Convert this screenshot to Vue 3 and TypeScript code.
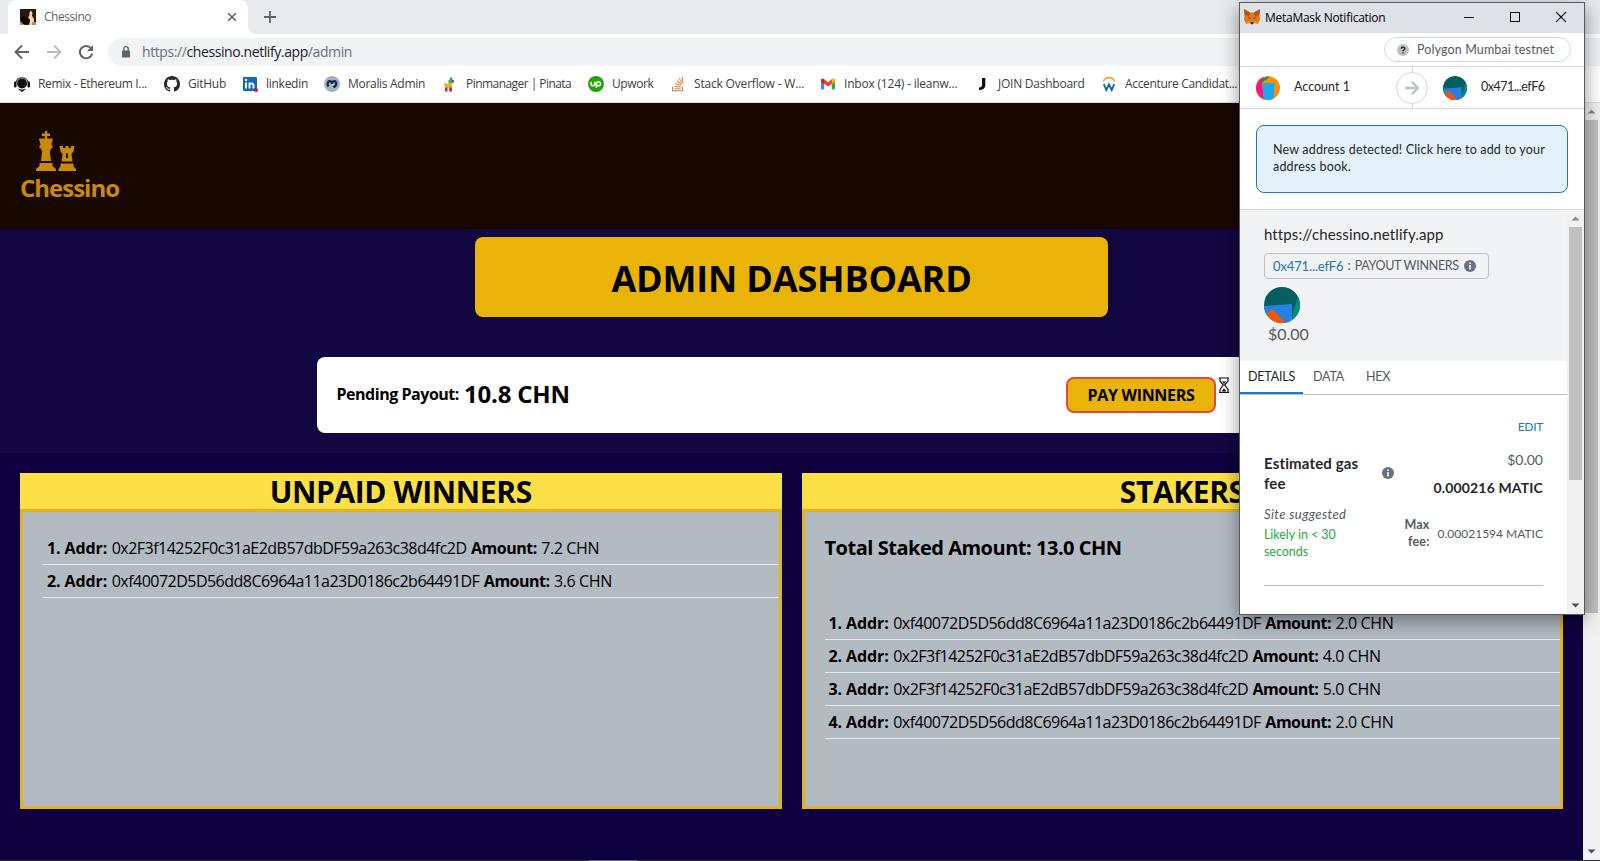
<script setup lang="ts">
interface Bookmark { id: string; label: string; width: number; tracking: number }
interface Entry { addr: string; amount: string }

const bookmarks: Bookmark[] = [
  { id: 'remix', label: 'Remix - Ethereum I...', width: 126, tracking: -0.33 },
  { id: 'github', label: 'GitHub', width: 54, tracking: -0.27 },
  { id: 'linkedin', label: 'linkedin', width: 58, tracking: -0.27 },
  { id: 'moralis', label: 'Moralis Admin', width: 94, tracking: -0.3 },
  { id: 'pinata', label: 'Pinmanager | Pinata', width: 122, tracking: -0.55 },
  { id: 'upwork', label: 'Upwork', width: 58, tracking: -0.4 },
  { id: 'stack', label: 'Stack Overflow - W...', width: 126, tracking: -0.18 },
  { id: 'gmail', label: 'Inbox (124) - ileanw...', width: 130, tracking: -0.2 },
  { id: 'join', label: 'JOIN Dashboard', width: 103, tracking: -0.24 },
  { id: 'accenture', label: 'Accenture Candidat...', width: 114, tracking: -0.34 },
]

const A = '0x2F3f14252F0c31aE2dB57dbDF59a263c38d4fc2D'
const B = '0xf40072D5D56dd8C6964a11a23D0186c2b64491DF'
const winners: Entry[] = [
  { addr: A, amount: '7.2 CHN' },
  { addr: B, amount: '3.6 CHN' },
]
const stakers: Entry[] = [
  { addr: B, amount: '2.0 CHN' },
  { addr: A, amount: '4.0 CHN' },
  { addr: A, amount: '5.0 CHN' },
  { addr: B, amount: '2.0 CHN' },
]
</script>

<template>
  <div class="screen">
    <div class="tabstrip">
      <div class="tab">
        <svg class="ic16" viewBox="0 0 16 16"><rect width="16" height="16" fill="#2a1712" /><path d="M9 16 10 11 8 9 9.500 6 9.500 3.500 11 1.500 12.500 4 12 7 14 10V16Z" fill="#efd9a8" /><path d="M1 9 4 7 8 9 10 11 9 15H3Z" fill="#080606" /><path d="M0 12 2 14 5 16H0ZM12 13H16V16H12Z" fill="#b98c5a" /></svg>
        <span class="t tabtitle">Chessino</span>
        <svg class="close" viewBox="0 0 16 16"><path d="M4.200 4.200 11.800 11.800M11.800 4.200 4.200 11.800" stroke="#5f6368" stroke-width="1.600" /></svg>
      </div>
      <svg class="flare" viewBox="0 0 8 8"><path d="M0 0A8 8 0 0 0 8 8H0Z" fill="#fff" /></svg>
      <svg class="plus" viewBox="0 0 16 16"><path d="M8 2V14M2 8H14" stroke="#5f6368" stroke-width="1.800" /></svg>
    </div>
    <div class="toolbar">
      <svg class="nav" viewBox="0 0 16 16"><path d="M15 8H2M8 1.500 1.500 8 8 14.500" fill="none" stroke="#5f6368" stroke-width="1.900" /></svg>
      <svg class="nav" viewBox="0 0 16 16"><path d="M1 8H14M8 1.500 14.500 8 8 14.500" fill="none" stroke="#babcbe" stroke-width="1.900" /></svg>
      <svg class="nav" viewBox="0 0 16 16"><path d="M13 4.200A6.200 6.200 0 1 0 14.200 9.500" fill="none" stroke="#5f6368" stroke-width="2" /><path d="M15 1V7H9Z" fill="#5f6368" /></svg>
      <div class="omnibox">
        <svg class="lock" viewBox="0 0 10 14"><rect x="1" y="5.500" width="8" height="7" rx="1" fill="#5f6368" /><path d="M2.800 6V3.800A2.200 2.200 0 0 1 7.200 3.800V6" fill="none" stroke="#5f6368" stroke-width="1.400" /></svg>
        <span class="t url"><i>https://</i>chessino.netlify.app<i>/admin</i></span>
      </div>
    </div>
    <div class="bookmarks">
      <div v-for="b in bookmarks" :key="b.id" class="bookmark">
        <svg class="ic16" viewBox="0 0 16 16">
          <g v-if="b.id === 'remix'"><circle cx="8" cy="7.500" r="5" fill="#111" /><path d="M1.800 7A6.300 6.300 0 0 1 14.200 7" fill="none" stroke="#444" stroke-width="1.200" /><rect x="0" y="5.500" width="2.500" height="6" rx="1.200" fill="#111" /><rect x="13.500" y="5.500" width="2.500" height="6" rx="1.200" fill="#111" /><path d="M3.500 12.500 8 16 12.500 12.500 8 13.800Z" fill="#111" /></g>
          <path v-else-if="b.id === 'github'" fill="#24292f" d="M8 0C3.580 0 0 3.580 0 8c0 3.540 2.290 6.530 5.470 7.590.4.070.55-.17.55-.38 0-.19-.01-.82-.01-1.490-2.010.37-2.530-.49-2.690-.94-.09-.23-.48-.94-.82-1.130-.28-.15-.68-.52-.01-.53.63-.01 1.080.58 1.230.82.72 1.210 1.870.87 2.330.66.070-.52.28-.87.51-1.070-1.780-.2-3.640-.89-3.640-3.950 0-.87.31-1.590.82-2.150-.08-.2-.36-1.020.08-2.120 0 0 .67-.21 2.200.82.64-.18 1.320-.27 2-.27s1.360.09 2 .27c1.530-1.040 2.200-.82 2.200-.82.44 1.100.16 1.920.08 2.120.51.56.82 1.270.82 2.150 0 3.070-1.870 3.750-3.650 3.950.29.25.54.73.54 1.480 0 1.070-.01 1.930-.01 2.200 0 .21.15.46.55.38A8.010 8.010 0 0 0 16 8c0-4.420-3.580-8-8-8z" />
          <g v-else-if="b.id === 'linkedin'"><rect x="1" y="1" width="14" height="14" rx="1" fill="#1467b8" /><path d="M4 6.500V12.500M7.500 12.500V6.500M7.500 9.500C7.500 7 11.500 6.500 11.500 9.500V12.500" fill="none" stroke="#fff" stroke-width="1.900" /><circle cx="4" cy="4" r="1.200" fill="#fff" /><circle cx="14" cy="14" r="2" fill="#d0142c" /></g>
          <g v-else-if="b.id === 'moralis'"><circle cx="8" cy="8" r="8" fill="#a3b2c2" /><path d="M4.500 10.500C2.500 8 4 4.800 6 5.200 7.200 5.400 8 6.500 8 8 8 6.500 8.800 5.400 10 5.200 12.500 5 13 9 10.500 10.800L9.500 9.500" fill="none" stroke="#10264f" stroke-width="2.200" /><circle cx="8.800" cy="8.800" r="1" fill="#e3e58a" /></g>
          <g v-else-if="b.id === 'pinata'" transform="translate(1 0)"><path d="M7.500 1 9.500 2 9 4.500 6.500 4Z" fill="#17a5a5" /><path d="M5.500 4H9V7H5.500Z" fill="#3fae5a" /><path d="M9 3.500 11 4.500V6.500H9Z" fill="#4358a5" /><path d="M8.500 5.500H10V7H8.500Z" fill="#d9305c" /><path d="M1 7 4 8V10H2Z" fill="#67b52b" /><path d="M2 9 5.500 7H9V12H2Z" fill="#f3b616" /><path d="M2 11.500H4.500V15.500H2ZM6.200 11.500H9V15.500H6.200Z" fill="#c31b8c" /></g>
          <g v-else-if="b.id === 'upwork'"><circle cx="8" cy="8" r="8" fill="#1fa50a" /><path d="M3 5.800V7.800A1.900 1.900 0 0 0 6.800 7.800V5.800M6.800 5.800C7.300 7.700 8.200 9.800 10.600 9.800A2.050 2.050 0 1 0 8.900 6.500L8.200 12" fill="none" stroke="#fff" stroke-width="1.500" /></g>
          <g v-else-if="b.id === 'stack'" fill="none"><path d="M2.600 10.500V14.800H12.600V10.500" stroke="#8b8b8b" stroke-width="1.100" /><path d="M4.500 12.700H10.700M4.600 10.300 10.700 11.100M5.200 7.600 11 9.500M6.800 4.700 11.800 8.200M9 2.200 12.500 7M12 .8 13.200 6.300" stroke="#e88037" stroke-width="1.100" /></g>
          <g v-else-if="b.id === 'gmail'"><path d="M1 4.500 4.200 7V13.500H2A1 1 0 0 1 1 12.500Z" fill="#4285f4" /><path d="M15 4.500 11.800 7V13.500H14A1 1 0 0 0 15 12.500Z" fill="#34a853" /><path d="M1 4.500C1 2.500 3 2.300 4.200 3.300L8 6.200 11.800 3.300C13 2.300 15 2.500 15 4.500V5.500L8 10.500 1 5.500Z" fill="#ea4335" /><path d="M15 4.500V5.800L11.800 8V3.300C13 2.300 15 2.500 15 4.500Z" fill="#fbbc04" /><path d="M1 4.500V5.800L4.200 8V3.300C3 2.300 1 2.500 1 4.500Z" fill="#c5221f" /></g>
          <path v-else-if="b.id === 'join'" d="M8 2H11.300V9C11.300 12.500 9 14 5 14V11.500C7.300 11.300 8 10.700 8 9Z" fill="#0d0f22" />
          <g v-else fill="none"><path d="M2.500 5.200A6 6 0 0 1 13.500 5.200" stroke="#f2a32c" stroke-width="1.600" /><path d="M2.800 8 5.300 14 8 8.500 10.700 14 13.200 8" stroke="#1266b1" stroke-width="1.900" /></g>
        </svg>
        <span class="label" :style="{ width: b.width + 'px', letterSpacing: b.tracking + 'px' }">{{ b.label }}</span>
      </div>
    </div>

    <div class="viewport">
      <main class="page">
        <header class="site-header">
          <div class="brand">
            <svg class="pieces" viewBox="0 0 42 42" fill="#c98a0a"><path d="M9.800 1H12.200V3.500H15V6H12.200V8.500H18L16.500 14.500 17.500 16V18L15.800 18.500V20L14.800 21 16 31H6L7.200 21 6.200 20V18.500L4.500 18V16L5.500 14.500 4 8.500H9.800V6H7V3.500H9.800ZM4.500 33H17.500V36L21 39V41H1V39L4.500 36Z" /><path d="M24.500 16H28V18H30.500V16H33.500V18H36V16H39.500L38.500 21.500 36.500 24 37.500 31.500H26.500L27.500 24 25.500 21.500ZM31 23.500V28H33V23.500ZM25.500 33.500H38.500V36.500L41 39V41H23.500V39L25.500 36.500Z" fill-rule="evenodd" /></svg>
            <span class="t brand-name">Chessino</span>
          </div>
        </header>
        <section class="hero">
          <h1 class="banner">ADMIN DASHBOARD</h1>
          <div class="payout">
            <span class="t payout-label">Pending Payout:</span>
            <span class="t payout-value">10.8 CHN</span>
            <button class="pay">PAY WINNERS</button>
          </div>
        </section>
        <section class="panels">
          <article class="panel">
            <h2>UNPAID WINNERS</h2>
            <div class="panel-body">
              <ul>
                <li v-for="(w, i) in winners" :key="i"><b class="num">{{ i + 1 }}. Addr:</b><span class="addr">{{ w.addr }}</span><b class="amt">Amount:</b><span class="val">{{ w.amount }}</span></li>
              </ul>
            </div>
          </article>
          <article class="panel">
            <h2>STAKERS</h2>
            <div class="panel-body">
              <p class="total">Total Staked Amount: 13.0 CHN</p>
              <ul>
                <li v-for="(w, i) in stakers" :key="i"><b class="num">{{ i + 1 }}. Addr:</b><span class="addr">{{ w.addr }}</span><b class="amt">Amount:</b><span class="val">{{ w.amount }}</span></li>
              </ul>
            </div>
          </article>
        </section>
      </main>
      <div class="page-scroll">
        <svg viewBox="0 0 17 17"><path d="M4.500 10.500 8.500 6.500 12.500 10.500Z" fill="#8b8b8b" /></svg>
        <div class="page-thumb"></div>
        <svg class="down" viewBox="0 0 17 17"><path d="M4.500 6.500 8.500 10.500 12.500 6.500Z" fill="#505050" /></svg>
      </div>
    </div>
    <div class="taskbar"><div class="taskbar-active"></div></div>

    <svg class="cursor" viewBox="0 0 12 17"><path d="M1 1H11M1 15.500H11M2 1V4L5.300 8 2 12.500V15.500M10 1V4L6.700 8 10 12.500V15.500" fill="#fff" stroke="#111" stroke-width="1.200" /><path d="M4 4.500H8L6 7ZM3.500 14.500 6 11.500 8.500 14.500Z" fill="#111" /></svg>

    <div class="wallet">
      <div class="titlebar">
        <svg class="fox" viewBox="0 0 16 16"><path d="M0 0 6 3.500H10L16 0 15.500 8 16 10.500 14 15 10 14 9 15.500H7L6 14 2 15 0 10.500.5 8Z" fill="#e2761b" /><path d="M0 0 6 3.500 5 7 .8 6ZM16 0 10 3.500 11 7 15.200 6Z" fill="#a8561c" /><path d="M3.500 8 6.500 9 6 10ZM12.500 8 9.500 9 10 10ZM6.800 13H9.200V15H6.800Z" fill="#233447" /><path d="M2 15 6 14 6.500 12 8 13 9.500 12 10 14 14 15 13 12H3Z" fill="#d9c1a8" opacity=".3" /></svg>
        <span class="t wtitle">MetaMask Notification</span>
        <div class="winbtns">
          <svg viewBox="0 0 12 12"><path d="M1 6.500H11" stroke="#111" /></svg>
          <svg viewBox="0 0 12 12"><rect x="1.500" y="1.500" width="9" height="9" fill="none" stroke="#111" /></svg>
          <svg viewBox="0 0 12 12"><path d="M1 1 11 11M11 1 1 11" stroke="#111" stroke-width="1.100" /></svg>
        </div>
      </div>
      <div class="network">
        <div class="network-pill">
          <svg class="q" viewBox="0 0 12 12"><circle cx="6" cy="6" r="6" fill="#bbc0c5" /><path d="M4.200 4.700C4.200 2.700 7.800 2.700 7.800 4.600 7.800 5.800 6 5.700 6 7.200M6 8.200V9.500" fill="none" stroke="#24272a" stroke-width="1.400" /></svg>
          <span class="t net">Polygon Mumbai testnet</span>
        </div>
      </div>
      <div class="accounts">
        <svg class="avatar" viewBox="0 0 24 24"><defs><clipPath id="c1"><circle cx="12" cy="12" r="12" /></clipPath></defs><g clip-path="url(#c1)"><rect width="24" height="24" fill="#f2920d" /><path d="M0 0H8L6 8 8 24H0Z" fill="#fb1877" /><path d="M4 5 12 0V2.500L5.500 6.500Z" fill="#0f8a7c" /><path d="M6 7.500 18.500 7 17.500 24H8Z" fill="#18a9f2" /></g></svg>
        <span class="t acc">Account 1</span>
        <div class="divider"><div class="arrow"><svg viewBox="0 0 16 16"><path d="M1 8H14M8 2 14 8 8 14" fill="none" stroke="#bbc0c5" stroke-width="2.300" /></svg></div></div>
        <svg class="avatar" viewBox="0 0 36 36"><defs><clipPath id="c2"><circle cx="18" cy="18" r="18" /></clipPath></defs><g clip-path="url(#c2)"><rect width="36" height="36" fill="#035e5d" /><path d="M34 8 28 30 30 36H36V8Z" fill="#018e7c" /><path d="M0 19 28 17V36H0Z" fill="#2481e2" /><path d="M0 30 8 22 22 36H0Z" fill="#fa5500" /></g></svg>
        <span class="t acc2">0x471...efF6</span>
      </div>
      <div class="notice-wrap"><div class="notice">New address detected! Click here to add to your<br>address book.</div></div>
      <div class="scroller">
        <div class="content">
          <div class="summary">
            <div class="origin">https://chessino.netlify.app</div>
            <div class="method"><span class="hexa">0x471...efF6</span><span class="colon">:</span><span class="fn">PAYOUT WINNERS</span><svg class="info" viewBox="0 0 12 12"><circle cx="6" cy="6" r="6" fill="#6a737d" /><path d="M6 5V9.500M6 2.500V4" stroke="#fff" stroke-width="1.500" /></svg></div>
            <svg class="bigav" viewBox="0 0 36 36"><g clip-path="url(#c2)"><rect width="36" height="36" fill="#035e5d" /><path d="M34 8 28 30 30 36H36V8Z" fill="#018e7c" /><path d="M0 19 28 17V36H0Z" fill="#2481e2" /><path d="M0 30 8 22 22 36H0Z" fill="#fa5500" /></g></svg>
            <div class="fiat">$0.00</div>
          </div>
          <nav class="tabs"><span class="on">DETAILS</span><span>DATA</span><span>HEX</span></nav>
          <div class="details">
            <div class="edit">EDIT</div>
            <div class="fees">
              <div class="fee-left">
                <div class="gas"><span>Estimated gas<br>fee</span><svg class="info" viewBox="0 0 12 12"><circle cx="6" cy="6" r="6" fill="#6a737d" /><path d="M6 5V9.500M6 2.500V4" stroke="#fff" stroke-width="1.500" /></svg></div>
                <div class="site">Site suggested</div>
                <div class="likely">Likely in &lt; 30<br>seconds</div>
              </div>
              <div class="fee-right">
                <div class="usd">$0.00</div>
                <div class="matic">0.000216 MATIC</div>
                <div class="max"><b>Max<br>fee:</b><span>0.00021594 MATIC</span></div>
              </div>
            </div>
          </div>
        </div>
        <div class="wscroll">
          <svg viewBox="0 0 17 17"><path d="M4.500 10.500 8.500 6.500 12.500 10.500Z" fill="#8b8b8b" /></svg>
          <div class="wthumb"></div>
          <svg class="down" viewBox="0 0 17 17"><path d="M4.500 6.500 8.500 10.500 12.500 6.500Z" fill="#505050" /></svg>
        </div>
      </div>
    </div>
  </div>
</template>

<style>
body { margin: 0; overflow: hidden; }
</style>

<style scoped>
* { box-sizing: border-box; }
.screen { position: relative; width: 1600px; height: 861px; overflow: hidden; display: flex; flex-direction: column; background: #fff; font-family: "Open Sans", "Noto Sans", sans-serif; color: #000; }
svg { display: block; flex: none; }
.t { white-space: nowrap; }
.ic16 { width: 16px; height: 16px; }
.tabstrip { height: 34px; flex: none; background: #e8eaed; display: flex; align-items: stretch; padding-left: 8px; }
.tab { width: 240px; background: #fff; border-radius: 8px 8px 0 0; display: flex; align-items: center; padding: 0 8px 0 12px; }
.tabtitle { margin: -1px 0 0 8px; font-size: 12px; letter-spacing: -.45px; color: #5f6368; flex: 1; }
.close { width: 16px; height: 16px; }
.flare { width: 8px; height: 8px; align-self: flex-end; }
.plus { width: 16px; height: 16px; margin: 9px 0 0 6px; }
.toolbar { height: 36px; flex: none; display: flex; align-items: center; padding-left: 14px; gap: 16px; }
.nav { width: 16px; height: 16px; }
.omnibox { flex: 1; height: 28px; margin-left: -2px; background: #f1f3f4; border-radius: 14px 0 0 14px; display: flex; align-items: center; padding-left: 13px; }
.lock { width: 10px; height: 14px; }
.url { margin: -1px 0 0 11px; font-size: 14px; letter-spacing: -.41px; color: #202124; }
.url i { font-style: normal; color: #6b6f73; }
.bookmarks { height: 33px; flex: none; border-bottom: 1px solid #dcdcdc; display: flex; align-items: center; padding: 0 0 4px 14px; font-size: 12px; color: #3c4043; }
.bookmark { display: flex; align-items: center; gap: 8px; flex: none; }
.label { white-space: nowrap; margin-top: -2px; }
.viewport { flex: 1; display: flex; min-height: 0; }
.page { width: 1583px; background: #0e003e; display: flex; flex-direction: column; }
.site-header { height: 126px; background: #180800; padding: 27px 0 0 20px; }
.brand { display: flex; flex-direction: column; }
.pieces { width: 42px; height: 42px; margin-left: 15px; }
.brand-name { font-size: 24px; font-weight: 700; letter-spacing: -1px; line-height: 32px; color: #c98a0a; }
.hero { height: 224px; background: #130741; display: flex; flex-direction: column; align-items: center; padding-top: 8px; }
.banner { margin: 0; width: 633px; height: 80px; border-radius: 8px; background: #e9b308; text-align: center; font-size: 36px; line-height: 83px; letter-spacing: -.18px; font-weight: 700; }
.payout { width: 949px; height: 76px; margin-top: 40px; border-radius: 8px; background: #fff; display: flex; align-items: center; padding: 0 50px 0 19.500px; font-weight: 700; }
.payout-label { font-size: 16px; letter-spacing: -.47px; margin-top: -3px; }
.payout-value { font-size: 24px; letter-spacing: -.2px; margin: -3px 0 0 5px; flex: 1; }
.pay { width: 150px; height: 36px; padding: 0; border: 2px solid #e5483c; border-radius: 8px; background: #e9b308; font: 700 16px "Open Sans", sans-serif; letter-spacing: -.3px; color: #000; }
.panels { display: flex; gap: 20px; padding: 20px 20px 0; }
.panel { flex: 1; height: 336px; display: flex; flex-direction: column; }
.panel h2 { margin: 0; height: 36px; background: #fde047; text-align: center; font-size: 30px; line-height: 38px; letter-spacing: -.38px; font-weight: 700; }
.panel-body { flex: 1; background: #b2bac2; border: 3px solid #e3b31c; padding: 20px 0 0 20px; }
ul { list-style: none; margin: 0; padding: 0; }
li { height: 33px; border-bottom: 1px solid #e5e7eb; padding-left: 4px; font-size: 16px; line-height: 32px; display: flex; gap: 4.500px; white-space: nowrap; }
.num { letter-spacing: -.1px; }
.addr { letter-spacing: -.52px; }
.amt { letter-spacing: -.5px; }
.val { letter-spacing: -.4px; }
.total { margin: 0; height: 75px; font-size: 20px; font-weight: 700; line-height: 31px; letter-spacing: -.48px; }
.page-scroll { width: 17px; background: #f1f1f1; display: flex; flex-direction: column; align-items: center; }
.page-scroll svg { width: 17px; height: 17px; }
.page-thumb { width: 13px; height: 493px; background: #c1c1c1; }
.down { margin-top: auto; }
.taskbar { height: 1px; flex: none; background: #2b2b33; }
.taskbar-active { width: 48px; height: 1px; margin-left: 589px; background: #6d6a78; }
.cursor { position: absolute; left: 1218px; top: 377px; width: 12px; height: 17px; }
.wallet { position: absolute; left: 1239px; top: 2px; width: 346px; height: 613px; border: 1px solid #55585c; background: #fff; box-shadow: 0 5px 18px rgba(0, 0, 0, .42); display: flex; flex-direction: column; font-family: Lato, sans-serif; color: #24272a; font-size: 12px; white-space: nowrap; }
.titlebar { height: 30px; flex: none; background: #dee1e6; display: flex; align-items: center; padding-left: 4px; font-family: "Open Sans", sans-serif; color: #000; }
.fox { width: 16px; height: 16px; margin-top: -2px; }
.wtitle { margin: -2px 0 0 5px; letter-spacing: -.27px; }
.winbtns { margin: -2px 0 0 auto; display: flex; gap: 34px; padding-right: 17px; }
.winbtns svg { width: 12px; height: 12px; }
.network { height: 34px; flex: none; border-bottom: 1px solid #d6d9dc; padding: 4px 13px 0 0; display: flex; justify-content: flex-end; }
.network-pill { width: 187px; height: 25px; border: 1px solid #d6d9dc; border-radius: 13px; display: flex; align-items: center; padding-left: 12px; color: #535a61; }
.q { width: 12px; height: 12px; }
.net { margin: -1px 0 0 8px; font-size: 12.500px; letter-spacing: .13px; }
.accounts { height: 42px; flex: none; border-bottom: 1px solid #d6d9dc; display: flex; align-items: center; padding-left: 16px; font-size: 12.500px; }
.avatar { width: 24px; height: 24px; }
.acc { margin: -2px 0 0 14px; width: 102px; }
.divider { height: 41px; margin-right: 15px; display: flex; align-items: center; background: linear-gradient(#d6d9dc, #d6d9dc) center / 1px 100% no-repeat; }
.arrow { width: 32px; height: 32px; border: 1px solid #d6d9dc; border-radius: 50%; background: #fff; display: flex; align-items: center; justify-content: center; }
.arrow svg { width: 16px; height: 16px; }
.acc2 { margin: -2px 0 0 14px; letter-spacing: -.48px; }
.notice-wrap { height: 101px; flex: none; border-bottom: 1px solid #d6d9dc; padding: 16px; }
.notice { height: 68px; border: 1px solid #1b78be; border-radius: 8px; background: #e3f1fb; padding: 15px 0 0 16px; font-size: 12.500px; letter-spacing: .17px; line-height: 17px; }
.scroller { flex: 1; display: flex; min-height: 0; }
.content { width: 327px; }
.summary { height: 151px; background: #f2f3f4; padding: 14px 0 0 24px; }
.origin { font-size: 15px; letter-spacing: .1px; line-height: 20px; height: 29px; }
.method { width: 225px; height: 26px; border: 1px solid #bbc0c5; border-radius: 4px; display: flex; align-items: center; padding: 0 0 1px 8px; color: #535a61; font-size: 12.500px; }
.hexa { color: #1c75bd; font-size: 13px; letter-spacing: -.13px; }
.colon { margin: 0 4px; }
.fn { letter-spacing: -.3px; }
.info { width: 12px; height: 12px; margin-left: 5px; }
.bigav { width: 36px; height: 36px; margin-top: 8px; }
.fiat { font-size: 16px; line-height: 22px; padding-left: 4px; color: #535a61; }
.tabs { height: 34px; border-bottom: 1px solid #bbc0c5; display: flex; color: #535a61; font-size: 12.500px; letter-spacing: -.2px; line-height: 32px; }
.tabs > span { padding: 0 8px; height: 33px; width: 55px; }
.tabs > .on { width: 63px; border-bottom: 2px solid #1c7cc9; color: #24272a; }
.tabs > .on + span { padding-left: 10px; }
.details { margin: 0 24px; height: 191px; border-bottom: 1px solid #bbc0c5; }
.edit { text-align: right; color: #1c75bd; padding-top: 23px; line-height: 18px; letter-spacing: -.3px; }
.fees { display: flex; justify-content: space-between; padding-top: 14px; }
.gas { display: flex; align-items: center; width: 130px; justify-content: space-between; font-size: 15px; letter-spacing: .15px; line-height: 20px; font-weight: 700; padding-top: 3px; }
.site { font-style: italic; font-size: 13px; letter-spacing: .4px; color: #535a61; line-height: 18px; margin-top: 12px; }
.likely { color: #28a745; font-size: 12.500px; letter-spacing: -.05px; line-height: 17px; margin-top: 3px; }
.fee-right { text-align: right; color: #535a61; }
.usd { font-size: 14px; line-height: 20px; }
.matic { font-size: 14px; letter-spacing: .15px; line-height: 20px; margin-top: 8px; font-weight: 700; color: #24272a; }
.max { display: flex; align-items: center; justify-content: flex-end; gap: 8px; margin-top: 18px; line-height: 17px; }
.max b { font-size: 12.500px; letter-spacing: .2px; }
.wscroll { width: 17px; background: #f1f1f1; display: flex; flex-direction: column; align-items: center; }
.wscroll svg { width: 17px; height: 17px; }
.wthumb { width: 13px; height: 253px; background: #c1c1c1; }
</style>
